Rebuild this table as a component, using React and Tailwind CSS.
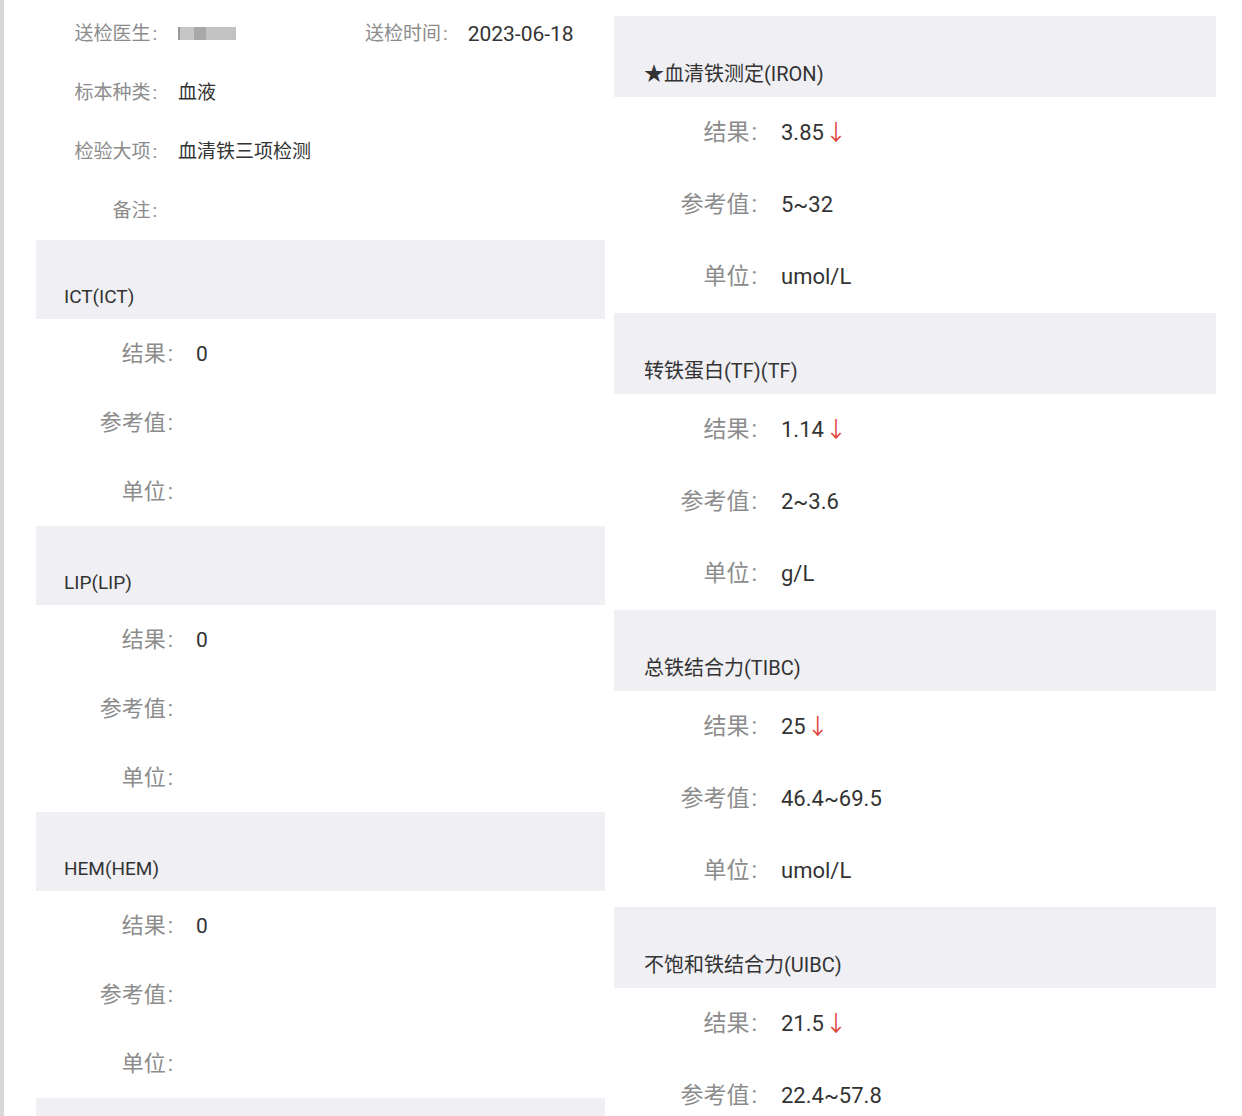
import React from "react";

const FONT = { fontFamily: 'Roboto, "Noto Sans CJK SC", "Noto Sans", sans-serif' };

function Arrow() {
  return <span className="text-[#e0453c] ml-[1px]">↓</span>;
}

function Label({ text }) {
  return (
    <>
      {text}
      <span className="ml-[2px]">:</span>
    </>
  );
}

function LeftSection({ title, rows }) {
  return (
    <div>
      <div className="h-[79px] bg-[#efeff4] pt-[43px] pl-[28px] text-[19px] leading-[28px] text-[#333]">{title}</div>
      {rows.map(([label, value], i) => (
        <div key={i} className="h-[69px] flex items-center">
          <div className="w-[137px] text-right text-[22px] text-[#8c8c8c] leading-[28px]"><Label text={label} /></div>
          <div className="ml-[23px] text-[21px] text-[#333] leading-[28px]">{value}</div>
        </div>
      ))}
    </div>
  );
}

function RightSection({ title, rows }) {
  return (
    <div>
      <div className="h-[81px] bg-[#efeff4] pt-[44px] pl-[30px] text-[20px] leading-[28px] text-[#333]">{title}</div>
      {rows.map(([label, value, low], i) => (
        <div key={i} className="h-[72px] flex items-center">
          <div className="w-[143px] text-right text-[23px] text-[#8c8c8c] leading-[30px]"><Label text={label} /></div>
          <div className="ml-[24px] text-[22px] text-[#333] leading-[30px]">
            {value}
            {low && <Arrow />}
          </div>
        </div>
      ))}
    </div>
  );
}

export default function App() {
  const emptyRows = [
    ["结果", "0"],
    ["参考值", ""],
    ["单位", ""],
  ];
  return (
    <div className="w-[1242px] h-[1116px] overflow-hidden bg-white flex" style={FONT}>
      <div className="w-[4px] h-full bg-[#d8d8d8] shrink-0" />
      <div className="ml-[32px] w-[569px] shrink-0">
        <div className="h-[240px] pt-[4px]">
          <div className="h-[59px] flex items-center text-[19px] leading-[26px]">
            <div className="w-[121px] text-right text-[#8c8c8c]"><Label text="送检医生" /></div>
            <div className="ml-[21px] w-[58px] h-[13px] flex">
              <div className="w-[2px] h-full bg-[#9a9a9a]" />
              <div className="w-[14px] h-full bg-[#c6c6c6]" />
              <div className="w-[12px] h-full bg-[#a8a8a8]" />
              <div className="w-[30px] h-full bg-[#c2c2c2]" />
            </div>
            <div className="ml-[129px] text-[#8c8c8c]"><Label text="送检时间" /></div>
            <div className="ml-[20px] text-[#333] text-[21px]">2023-06-18</div>
          </div>
          <div className="h-[59px] flex items-center text-[19px] leading-[26px]">
            <div className="w-[121px] text-right text-[#8c8c8c]"><Label text="标本种类" /></div>
            <div className="ml-[21px] text-[#333]">血液</div>
          </div>
          <div className="h-[59px] flex items-center text-[19px] leading-[26px]">
            <div className="w-[121px] text-right text-[#8c8c8c]"><Label text="检验大项" /></div>
            <div className="ml-[21px] text-[#333]">血清铁三项检测</div>
          </div>
          <div className="h-[59px] flex items-center text-[19px] leading-[26px]">
            <div className="w-[121px] text-right text-[#8c8c8c]"><Label text="备注" /></div>
          </div>
        </div>
        <LeftSection title="ICT(ICT)" rows={emptyRows} />
        <LeftSection title="LIP(LIP)" rows={emptyRows} />
        <LeftSection title="HEM(HEM)" rows={emptyRows} />
        <div className="h-[79px] bg-[#efeff4]" />
      </div>
      <div className="ml-[9px] w-[602px] shrink-0 pt-[16px]">
        <RightSection
          title="★血清铁测定(IRON)"
          rows={[
            ["结果", "3.85", true],
            ["参考值", "5~32"],
            ["单位", "umol/L"],
          ]}
        />
        <RightSection
          title="转铁蛋白(TF)(TF)"
          rows={[
            ["结果", "1.14", true],
            ["参考值", "2~3.6"],
            ["单位", "g/L"],
          ]}
        />
        <RightSection
          title="总铁结合力(TIBC)"
          rows={[
            ["结果", "25", true],
            ["参考值", "46.4~69.5"],
            ["单位", "umol/L"],
          ]}
        />
        <RightSection
          title="不饱和铁结合力(UIBC)"
          rows={[
            ["结果", "21.5", true],
            ["参考值", "22.4~57.8"],
            ["单位", "umol/L"],
          ]}
        />
      </div>
    </div>
  );
}
